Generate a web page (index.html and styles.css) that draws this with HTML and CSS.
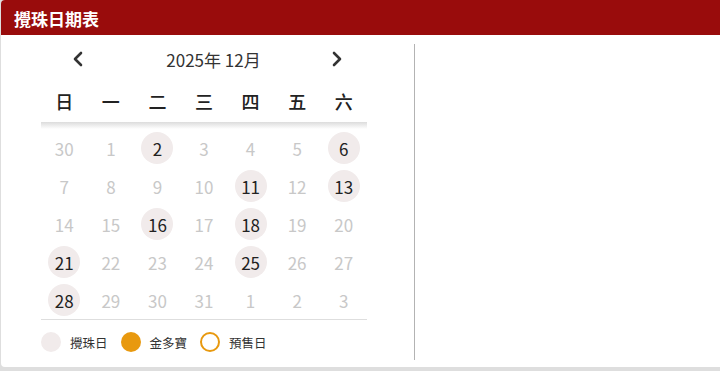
FILE: index.html
```html
<!DOCTYPE html>
<html lang="zh-Hant">
<head>
<meta charset="utf-8">
<link rel="stylesheet" href="styles.css">
</head>
<body>
<div class="card">
  <div class="card-head">攪珠日期表</div>
  <div class="card-body">
    <div class="cal-col">
      <div class="cal">
        <div class="nav">
          <span class="nav-btn"><svg width="12" height="16" viewBox="0 0 12 16"><path d="M9 2 L3 8 L9 14" fill="none" stroke="#333" stroke-width="2.6" stroke-linecap="round" stroke-linejoin="round"/></svg></span>
          <span class="nav-title">2025年 12月</span>
          <span class="nav-btn"><svg width="12" height="16" viewBox="0 0 12 16"><path d="M3 2 L9 8 L3 14" fill="none" stroke="#333" stroke-width="2.6" stroke-linecap="round" stroke-linejoin="round"/></svg></span>
        </div>
        <div class="week">
          <span>日</span><span>一</span><span>二</span><span>三</span><span>四</span><span>五</span><span>六</span>
        </div>
        <div class="week-shadow"></div>
        <div class="days">
          <span class="d dim">30</span><span class="d dim">1</span><span class="d on">2</span><span class="d dim">3</span><span class="d dim">4</span><span class="d dim">5</span><span class="d on">6</span>
          <span class="d dim">7</span><span class="d dim">8</span><span class="d dim">9</span><span class="d dim">10</span><span class="d on">11</span><span class="d dim">12</span><span class="d on">13</span>
          <span class="d dim">14</span><span class="d dim">15</span><span class="d on">16</span><span class="d dim">17</span><span class="d on">18</span><span class="d dim">19</span><span class="d dim">20</span>
          <span class="d on">21</span><span class="d dim">22</span><span class="d dim">23</span><span class="d dim">24</span><span class="d on">25</span><span class="d dim">26</span><span class="d dim">27</span>
          <span class="d on">28</span><span class="d dim">29</span><span class="d dim">30</span><span class="d dim">31</span><span class="d dim">1</span><span class="d dim">2</span><span class="d dim">3</span>
        </div>
        <div class="legend">
          <span class="dot dot-draw"></span><span class="legend-label">攪珠日</span>
          <span class="dot dot-jackpot"></span><span class="legend-label">金多寶</span>
          <span class="dot dot-presale"></span><span class="legend-label">預售日</span>
        </div>
      </div>
    </div>
    <div class="side"></div>
  </div>
</div>
</body>
</html>
```
FILE: styles.css
```css
html, body {
  margin: 0;
  padding: 0;
}
body {
  background: #dedede;
  font-family: "Noto Sans CJK TC", "Noto Sans", sans-serif;
  width: 720px;
  height: 371px;
  overflow: hidden;
}
.card {
  margin-left: 1px;
  width: 724px;
  height: 367px;
  background: #fff;
  border-radius: 4px;
  overflow: hidden;
}
.card-head {
  height: 35px;
  background: #990c0c;
  color: #fff;
  font-size: 17px;
  font-weight: 700;
  line-height: 37px;
  padding-left: 13px;
}
.card-body {
  display: flex;
  padding-top: 9px;
  height: 316px;
}
.cal-col {
  width: 414px;
  border-right: 1px solid #b3b3b3;
  padding-left: 40px;
  box-sizing: border-box;
}
.cal {
  width: 326px;
}
.nav {
  display: flex;
  align-items: center;
  height: 30px;
  padding: 0 23px 0 30px;
}
.nav-btn {
  width: 14px;
  display: flex;
  justify-content: center;
}
.nav-title {
  flex: 1;
  text-align: center;
  padding-left: 12px;
  font-size: 17px;
  color: #333;
}
.week {
  display: grid;
  grid-template-columns: repeat(7, 1fr);
  height: 42px;
  padding-top: 6px;
  align-items: center;
  font-size: 18px;
  font-weight: 500;
  color: #222;
  text-align: center;
}
.week-shadow {
  height: 7px;
  background: linear-gradient(#dcdcdc, #fff);
}
.days {
  display: grid;
  grid-template-columns: repeat(7, 1fr);
  grid-auto-rows: 38px;
  margin-top: 0;
  border-bottom: 1px solid #dedede;
}
.d {
  justify-self: center;
  align-self: center;
  width: 32px;
  height: 32px;
  border-radius: 50%;
  display: flex;
  align-items: center;
  justify-content: center;
  font-size: 17px;
}
.dim {
  color: #c8c8c8;
}
.on {
  color: #222;
  background: #f1ebeb;
}
.legend {
  display: flex;
  align-items: center;
  height: 44px;
  font-size: 12.5px;
  color: #333;
}
.dot {
  width: 20px;
  height: 20px;
  border-radius: 50%;
  box-sizing: border-box;
  margin-right: 9px;
}
.legend-label {
  margin-right: 13px;
}
.dot-draw {
  background: #f1ebeb;
}
.dot-jackpot {
  background: #e8990f;
}
.dot-presale {
  border: 2px solid #e8990f;
}
.side {
  flex: 1;
}
```
